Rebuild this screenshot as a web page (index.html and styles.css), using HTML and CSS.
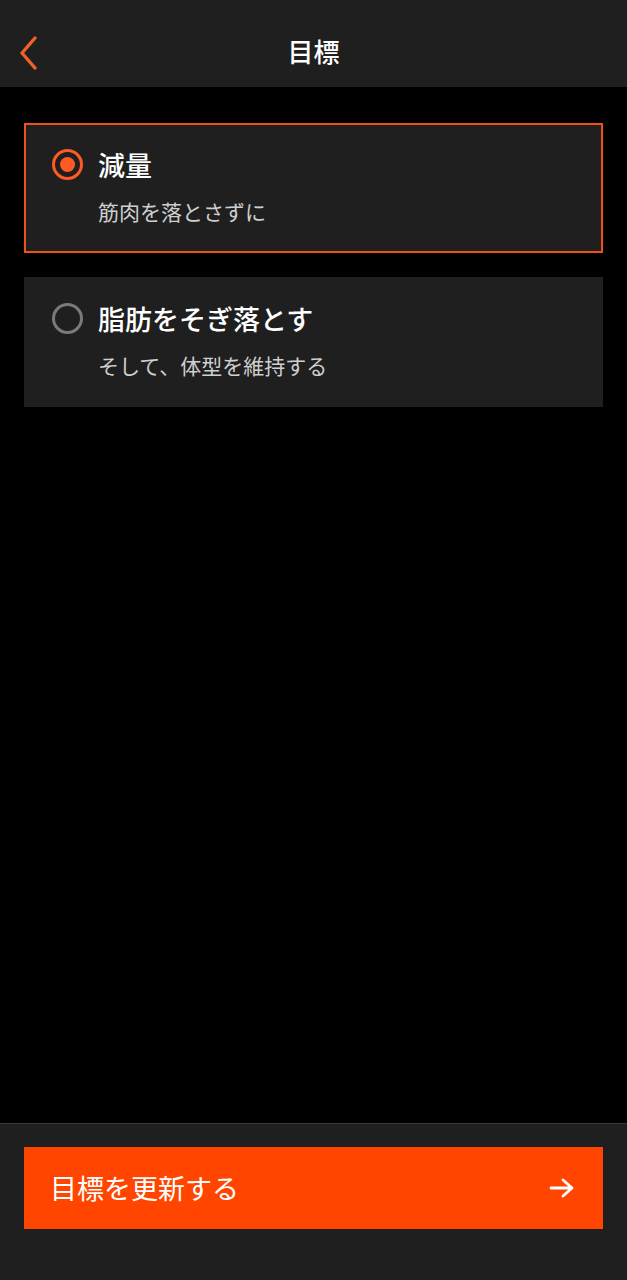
FILE: index.html
```html
<!DOCTYPE html>
<html lang="ja">
<head>
    <meta charset="UTF-8">
    <meta name="viewport" content="width=device-width, initial-scale=1.0">
    <title>目標</title>
    <link rel="stylesheet" href="styles.css">
</head>
<body>
    <div class="page">
        <header class="topbar">
            <a class="back" href="#">
                <svg width="20" height="34" viewBox="0 0 20 34">
                    <path d="M17 2 L4 17 L17 32" fill="none" stroke="#f0602a" stroke-width="3.4" stroke-linecap="round" stroke-linejoin="round"/>
                </svg>
            </a>
            <h1>目標</h1>
        </header>

        <ul class="goals">
            <li class="goal selected">
                <div class="goal-head">
                    <span class="radio"></span>
                    <span class="goal-title">減量</span>
                </div>
                <p class="goal-sub">筋肉を落とさずに</p>
            </li>
            <li class="goal">
                <div class="goal-head">
                    <span class="radio"></span>
                    <span class="goal-title">脂肪をそぎ落とす</span>
                </div>
                <p class="goal-sub">そして、体型を維持する</p>
            </li>
        </ul>

        <footer class="bottom">
            <button class="update">
                <span>目標を更新する</span>
                <svg width="26" height="20" viewBox="0 0 26 20">
                    <path d="M2 10 H23 M14 2 L23 10 L14 18" fill="none" stroke="#fff" stroke-width="2.8" stroke-linecap="round" stroke-linejoin="round"/>
                </svg>
            </button>
        </footer>
    </div>
</body>
</html>
```

FILE: styles.css
```css
*{
    margin: 0;
    padding: 0;
    box-sizing: border-box;
}
body{
    background: #000;
    font-family: "Noto Sans CJK JP", "Noto Sans", sans-serif;
    color: #fff;
}
.page{
    height: 1280px;
    display: flex;
    flex-direction: column;
}
.topbar{
    height: 87px;
    background: #1f1f1f;
    display: flex;
    align-items: center;
    justify-content: center;
    position: relative;
}
.topbar h1{
    font-size: 26px;
    font-weight: 500;
    line-height: 1;
    margin-top: 14px;
}
.back{
    position: absolute;
    left: 18px;
    top: 36px;
    display: block;
    width: 20px;
    height: 34px;
}

.goals{
    list-style: none;
    padding: 36px 24px 0;
    flex: 1;
    display: flex;
    flex-direction: column;
    gap: 24px;
}
.goal{
    background: #1f1f1f;
    height: 130px;
    padding: 22px 26px 0 26px;
    border: 2px solid transparent;
}
.goal.selected{
    border-color: #f0501a;
}
.goal-head{
    display: flex;
    align-items: center;
    gap: 15px;
    height: 34px;
}
.radio{
    width: 31px;
    height: 31px;
    border-radius: 50%;
    border: 3px solid #7a7a7a;
    display: flex;
    align-items: center;
    justify-content: center;
    flex-shrink: 0;
}
.selected .radio{
    border-color: #ff5a24;
}
.selected .radio::after{
    content: "";
    width: 15px;
    height: 15px;
    border-radius: 50%;
    background: #ff5a24;
}
.goal-title{
    font-size: 27px;
    font-weight: 500;
    line-height: 1;
}
.goal-sub{
    margin-top: 20px;
    padding-left: 46px;
    font-size: 21px;
    color: #cfcfcf;
    line-height: 1;
}

.bottom{
    height: 157px;
    background: #1f1f1f;
    border-top: 1px solid #3a3a3a;
    padding: 23px 24px 0;
}
.update{
    width: 100%;
    height: 82px;
    background: #ff4500;
    border: none;
    color: #fff;
    font-family: inherit;
    font-size: 27px;
    display: flex;
    align-items: center;
    justify-content: space-between;
    padding: 0 28px 0 26px;
}
.update span{
    line-height: 1;
    margin-top: -2px;
}
```
